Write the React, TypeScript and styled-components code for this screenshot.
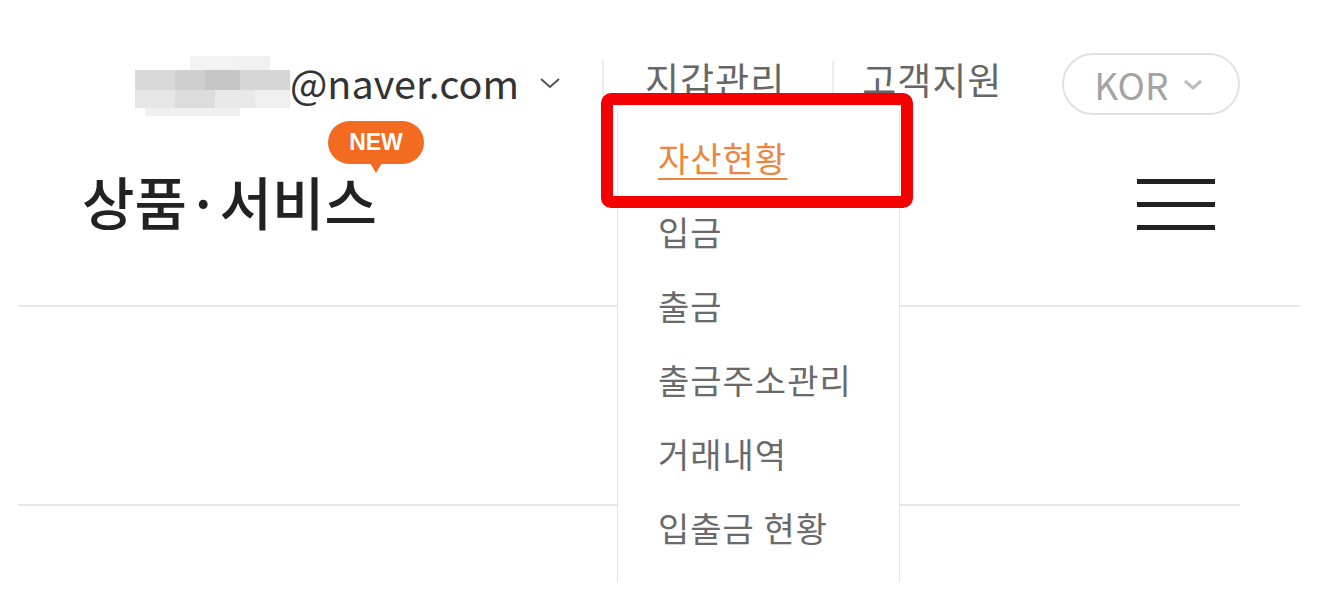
import React from "react";
import styled, { createGlobalStyle } from "styled-components";

// ||||||||||||||||||||||||||||| Global ||||||||||||||||||||||||||||||||||||

const GlobalStyle = createGlobalStyle`
  html, body {
    margin: 0;
    padding: 0;
    background: #fff;
  }
  body {
    font-family: "Noto Sans CJK KR", "Noto Sans", sans-serif;
    color: #222;
  }
`;

// ||||||||||||||||||||||||||||| Layout ||||||||||||||||||||||||||||||||||||

const Page = styled.div`
  width: 1320px;
  height: 601px;
  overflow: hidden;
  position: relative;
  background: #fff;
`;

const TopBar = styled.div`
  display: flex;
  align-items: center;
  height: 66px;
  margin-top: 50px;
  padding-left: 135px;
`;

const Account = styled.div`
  display: flex;
  align-items: center;
  color: #333;
  font-size: 39.5px;
  margin-top: -4px;
`;

const Masked = styled.svg`
  display: block;
  margin-top: 10px;
`;

const Chevron = styled.svg<{ $ml: number }>`
  display: block;
  margin-left: ${(p) => p.$ml}px;
  margin-top: 4px;
`;

const Divider = styled.span<{ $ml: number }>`
  width: 2px;
  height: 44px;
  background: #ededed;
  margin-left: ${(p) => p.$ml}px;
`;

const NavItem = styled.div<{ $ml: number }>`
  position: relative;
  margin-left: ${(p) => p.$ml}px;
  font-size: 37px;
  color: #666;
  line-height: 1;
  margin-top: -8px;
  letter-spacing: 1px;
`;

const LangPill = styled.div`
  display: flex;
  align-items: center;
  justify-content: center;
  gap: 14px;
  margin-left: 60px;
  box-sizing: border-box;
  width: 178px;
  height: 62px;
  margin-top: 2px;
  border: 2px solid #e2e2e2;
  border-radius: 31px;
  color: #a3a3a3;
  font-size: 37px;
  line-height: 1;
  padding-right: 4px;
`;

const TitleRow = styled.div`
  display: flex;
  align-items: center;
  justify-content: space-between;
  height: 178px;
  padding: 0 105px 0 82px;
`;

const Title = styled.h1`
  position: relative;
  margin: 0;
  font-size: 57px;
  font-weight: 500;
  color: #222;
  line-height: 60px;
  margin-top: -10px;
`;

const NewBadge = styled.span`
  position: absolute;
  left: 246px;
  top: -49px;
  width: 96px;
  height: 43px;
  border-radius: 22px;
  background: #f26b21;
  color: #fff;
  font-family: "Liberation Sans", Arial, sans-serif;
  font-weight: 700;
  font-size: 23px;
  line-height: 43px;
  text-align: center;

  &::after {
    content: "";
    position: absolute;
    left: 42px;
    bottom: -9px;
    border-left: 6px solid transparent;
    border-right: 6px solid transparent;
    border-top: 10px solid #f26b21;
  }
`;

const Rule = styled.hr<{ $right: number; $top: number }>`
  margin: ${(p) => p.$top}px ${(p) => p.$right}px 0 18px;
  border: 0;
  height: 2px;
  background: #e8e8e8;
`;

const Spacer = styled.div`
  height: 197px;
`;

// ||||||||||||||||||||||||||||| Dropdown ||||||||||||||||||||||||||||||||||||

const Dropdown = styled.ul`
  position: absolute;
  left: -28px;
  top: 50px;
  width: 283px;
  box-sizing: border-box;
  margin: 0;
  padding: 10px 0 17px 0;
  list-style: none;
  background: #fff;
  border-left: 1px solid #e4e4e4;
  border-right: 1px solid #e4e4e4;
  z-index: 2;
`;

const MenuItem = styled.li<{ $active?: boolean }>`
  height: 74px;
  display: flex;
  align-items: center;
  padding-left: 40px;
  font-size: 34px;
  letter-spacing: 1px;
  color: ${(p) => (p.$active ? "#ec853f" : "#6a6a6a")};
  text-decoration: ${(p) => (p.$active ? "underline" : "none")};
  text-underline-offset: 6px;
  text-decoration-thickness: 2px;
  white-space: nowrap;
`;

const Highlight = styled.div`
  position: absolute;
  left: -17px;
  top: -18px;
  width: 312px;
  height: 115px;
  box-sizing: border-box;
  border: 12px solid #f50000;
  border-radius: 10px;
  z-index: 3;
`;

const Hamburger = styled.svg`
  display: block;
`;

// ||||||||||||||||||||||||||||| Data ||||||||||||||||||||||||||||||||||||

const walletMenu = ["자산현황", "입금", "출금", "출금주소관리", "거래내역", "입출금 현황"];

const pixels: [number, number, number, number, string][] = [
  [55, 0, 40, 14, "#f3f3f3"],
  [95, 0, 40, 14, "#f1f1f1"],
  [0, 14, 40, 20, "#d9d9d9"],
  [40, 14, 30, 20, "#cfcfcf"],
  [70, 14, 35, 20, "#c6c6c6"],
  [105, 14, 50, 20, "#d6d6d6"],
  [0, 34, 40, 18, "#e6e6e6"],
  [40, 34, 40, 18, "#dcdcdc"],
  [80, 34, 40, 18, "#e9e9e9"],
  [120, 34, 35, 18, "#efefef"],
  [10, 52, 95, 8, "#f0f0f0"],
];

// ||||||||||||||||||||||||||||| App ||||||||||||||||||||||||||||||||||||

const App: React.FC = () => {
  return (
    <Page>
      <GlobalStyle />
      <TopBar>
        <Account>
          <Masked width="155" height="60" viewBox="0 0 155 60">
            {pixels.map(([x, y, w, h, c], i) => (
              <rect key={i} x={x} y={y} width={w} height={h} fill={c} />
            ))}
          </Masked>
          <span>@naver.com</span>
          <Chevron $ml={20} width="22" height="14" viewBox="0 0 22 14">
            <path d="M2 3l9 8 9-8" fill="none" stroke="#555" strokeWidth="2" />
          </Chevron>
        </Account>
        <Divider $ml={41} />
        <NavItem $ml={41}>
          지갑관리
          <Dropdown>
            {walletMenu.map((m, i) => (
              <MenuItem key={m} $active={i === 0}>
                {m}
              </MenuItem>
            ))}
            <Highlight />
          </Dropdown>
        </NavItem>
        <Divider $ml={47} />
        <NavItem $ml={28}>고객지원</NavItem>
        <LangPill>
          KOR
          <svg width="22" height="14" viewBox="0 0 22 14">
            <path d="M3 4l8 7 8-7" fill="none" stroke="#bdbdbd" strokeWidth="3" />
          </svg>
        </LangPill>
      </TopBar>

      <TitleRow>
        <Title>
          상품·서비스
          <NewBadge>NEW</NewBadge>
        </Title>
        <Hamburger width="78" height="52" viewBox="0 0 78 52">
          <rect x="0" y="0" width="78" height="5" fill="#222" />
          <rect x="0" y="23" width="78" height="5" fill="#222" />
          <rect x="0" y="46" width="78" height="5" fill="#222" />
        </Hamburger>
      </TitleRow>

      <Rule $right={20} $top={11} />
      <Spacer />
      <Rule $right={80} $top={0} />
    </Page>
  );
};

export default App;
